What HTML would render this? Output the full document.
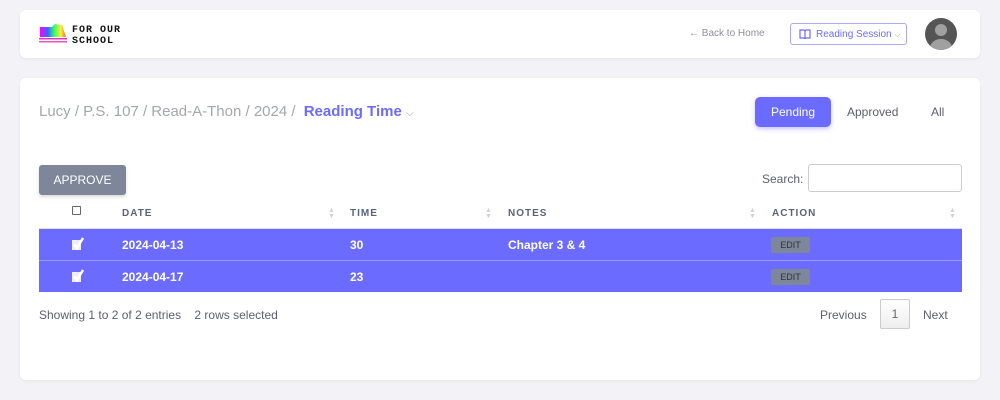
<!DOCTYPE html><html><head><style>
*{box-sizing:border-box;margin:0;padding:0}
body{width:1000px;height:400px;background:#f3f3f7;font-family:"Liberation Sans",sans-serif;position:relative;overflow:hidden}
.card{position:absolute;background:#fff;border-radius:6px;box-shadow:0 1px 3px rgba(0,0,0,.06)}
.a{position:absolute;white-space:nowrap}
.th{position:absolute;top:208px;font-size:10px;font-weight:bold;letter-spacing:1px;color:#5a6478}
.row{position:absolute;left:39px;width:923px;height:31px;background:#6b6bff;color:#fff;font-size:12px;font-weight:bold}
.row span{position:absolute;top:9px}
.row svg{position:absolute;left:32px;top:8px}
.edit{position:absolute;left:732px;top:8px;width:39px;height:16px;background:#7d8799;border-radius:2px;color:#333;font-size:9px;font-weight:normal;text-align:center;line-height:16px}
.sort{position:absolute;top:208px;font-size:7px;color:#cfd3da;line-height:6px}
</style></head><body>
<div class="card" style="left:20px;top:10px;width:960px;height:48px"></div>
<svg class="a" style="left:38px;top:22px" width="30" height="22" viewBox="0 0 30 22">
<defs><linearGradient id="g" x1="0" x2="1"><stop offset="0" stop-color="#f0f"/><stop offset=".3" stop-color="#36f"/><stop offset=".55" stop-color="#3f6"/><stop offset=".8" stop-color="#fe3"/><stop offset="1" stop-color="#f63"/></linearGradient></defs>
<path d="M2 5 L14 5 L17 2 L24 3 L28 15 L2 15Z" fill="url(#g)"/><rect x="1" y="16" width="28" height="1.5" fill="#d3c"/><rect x="1" y="19" width="28" height="1.5" fill="#e5b"/></svg>
<div class="a" style="left:72px;top:25px;font-size:10px;font-weight:bold;line-height:11px;letter-spacing:1px;color:#111;font-family:'Liberation Mono',monospace">FOR OUR<br>SCHOOL</div>
<div class="a" style="left:689px;top:28px;font-size:10px;color:#8a90a0">← Back to Home</div>
<div class="a" style="left:790px;top:23px;width:117px;height:22px;border:1px solid #a9a9ff;border-radius:3px;color:#6b6bff;font-size:10px;padding:5px 0 0 25px">Reading Session <span style="color:#999;font-size:8px">⌵</span></div>
<svg class="a" style="left:799px;top:29px" width="12" height="10"><path d="M1 1h4l1 1 1-1h4v8h-4l-1 1-1-1h-4z M6 2v7" fill="none" stroke="#6b6bff" stroke-width="1.2"/></svg>
<svg class="a" style="left:925px;top:18px" width="32" height="32"><defs><clipPath id="c"><circle cx="16" cy="16" r="16"/></clipPath></defs><circle cx="16" cy="16" r="16" fill="#555"/><g clip-path="url(#c)" fill="#a0a0a0"><circle cx="16" cy="12" r="6"/><ellipse cx="16" cy="30" rx="11" ry="9"/></g></svg>
<div class="card" style="left:20px;top:78px;width:960px;height:302px"></div>
<div class="a" style="left:39px;top:103px;font-size:15px;color:#a3a7b0">Lucy / P.S. 107 / Read-A-Thon / 2024 / <b style="color:#6b6bff;margin-left:4px">Reading Time</b> <span style="font-size:10px;color:#999">⌵</span></div>
<div class="a" style="left:755px;top:97px;width:76px;height:30px;background:#6b6bff;border-radius:5px;color:#fff;font-size:12px;text-align:center;line-height:30px;box-shadow:0 2px 5px rgba(107,107,255,.4)">Pending</div>
<div class="a" style="left:847px;top:105px;font-size:12px;color:#5a6070">Approved</div>
<div class="a" style="left:931px;top:105px;font-size:12px;color:#5a6070">All</div>
<div class="a" style="left:39px;top:165px;width:87px;height:30px;background:#7d8799;border-radius:3px;color:#fff;font-size:12px;text-align:center;line-height:30px;box-shadow:0 2px 3px rgba(0,0,0,.15)">APPROVE</div>
<div class="a" style="left:762px;top:172px;font-size:12px;color:#5a6070">Search:</div>
<div class="a" style="left:808px;top:164px;width:154px;height:28px;border:1px solid #ccc;border-radius:3px"></div>
<div class="a" style="left:72px;top:206px;width:9px;height:9px;border:1px solid #666;border-radius:1px"></div>
<div class="th" style="left:122px">DATE</div><div class="th" style="left:350px">TIME</div><div class="th" style="left:508px">NOTES</div><div class="th" style="left:772px">ACTION</div>
<div class="sort" style="left:328px">▲<br>▼</div><div class="sort" style="left:485px">▲<br>▼</div><div class="sort" style="left:749px">▲<br>▼</div><div class="sort" style="left:949px">▲<br>▼</div>
<div class="a" style="left:39px;top:228px;width:923px;height:1px;background:#dde"></div>
<div class="row" style="top:229px"><svg width="14" height="14"><rect x="1" y="3" width="9" height="10" fill="#eee"/><path d="M3 7l3 4 6-10" fill="none" stroke="#fff" stroke-width="2.5"/></svg><span style="left:83px">2024-04-13</span><span style="left:311px">30</span><span style="left:469px">Chapter 3 &amp; 4</span><div class="edit">EDIT</div></div>
<div class="row" style="top:261px"><svg width="14" height="14"><rect x="1" y="3" width="9" height="10" fill="#eee"/><path d="M3 7l3 4 6-10" fill="none" stroke="#fff" stroke-width="2.5"/></svg><span style="left:83px">2024-04-17</span><span style="left:311px">23</span><div class="edit">EDIT</div></div>
<div class="a" style="left:39px;top:260px;width:923px;height:1px;background:#9a9aff"></div>
<div class="a" style="left:39px;top:308px;font-size:12px;color:#5a6070">Showing 1 to 2 of 2 entries &nbsp;&nbsp;&nbsp;2 rows selected</div>
<div class="a" style="left:820px;top:308px;font-size:12px;color:#5a6070">Previous</div>
<div class="a" style="left:880px;top:299px;width:30px;height:30px;border:1px solid #ccc;border-radius:2px;background:linear-gradient(#fff,#eee);font-size:12px;color:#666;text-align:center;line-height:28px">1</div>
<div class="a" style="left:923px;top:308px;font-size:12px;color:#5a6070">Next</div>
</body></html>
